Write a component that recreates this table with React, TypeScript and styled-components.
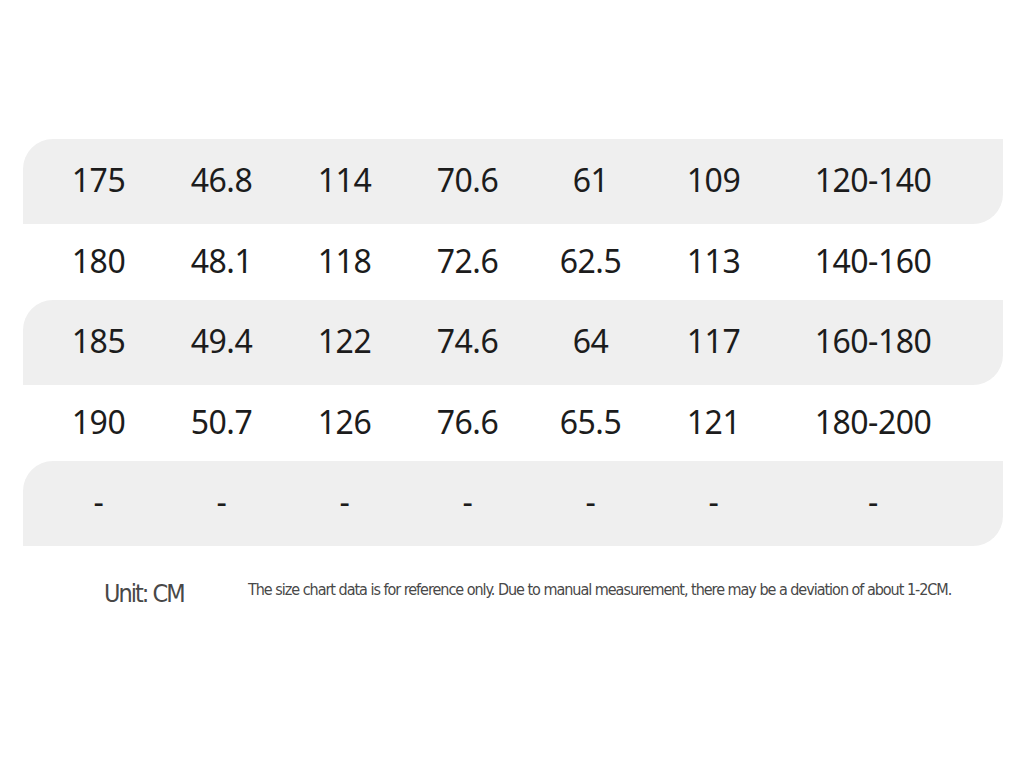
import styled, { createGlobalStyle } from 'styled-components'

const GlobalStyle = createGlobalStyle`
  body {
    margin: 0;
    background: #ffffff;
  }
`

const Page = styled.div`
  width: 1024px;
  height: 768px;
  padding-top: 139px;
  box-sizing: border-box;
`

const Table = styled.div`
  width: 980px;
  margin-left: 23px;
  display: flex;
  flex-direction: column;
`

const Row = styled.div<{ $shaded: boolean }>`
  display: grid;
  grid-template-columns: repeat(6, 123px) 196px;
  padding-left: 14px;
  padding-bottom: 3px;
  box-sizing: border-box;
  align-items: center;
  height: ${(p) => (p.$shaded ? '85px' : '76px')};
  background: ${(p) => (p.$shaded ? '#efefef' : 'transparent')};
  border-radius: 30px 0 30px 0;
`

const Cell = styled.div`
  text-align: center;
  font-family: 'Noto Sans', 'Open Sans', sans-serif;
  font-size: 32px;
  letter-spacing: -0.5px;
  color: #1c1c1c;
  line-height: 1;
`

const Footer = styled.div`
  display: flex;
  align-items: flex-start;
  padding-left: 104px;
  margin-top: 34px;
  color: #484848;
  font-family: 'DejaVu Sans Condensed', 'DejaVu Sans', sans-serif;
  font-stretch: condensed;
  white-space: nowrap;
`

const Unit = styled.div`
  width: 144px;
  font-size: 25px;
  letter-spacing: -2px;
  line-height: 1;
  margin-top: 1px;
`

const Note = styled.div`
  font-size: 16px;
  letter-spacing: -1.02px;
  line-height: 1;
  margin-top: 2px;
`

const rows = [
  ['175', '46.8', '114', '70.6', '61', '109', '120-140'],
  ['180', '48.1', '118', '72.6', '62.5', '113', '140-160'],
  ['185', '49.4', '122', '74.6', '64', '117', '160-180'],
  ['190', '50.7', '126', '76.6', '65.5', '121', '180-200'],
  ['-', '-', '-', '-', '-', '-', '-'],
]

export default function App() {
  return (
    <Page>
      <GlobalStyle />
      <Table>
        {rows.map((row, i) => (
          <Row key={i} $shaded={i % 2 === 0}>
            {row.map((v, j) => (
              <Cell key={j}>{v}</Cell>
            ))}
          </Row>
        ))}
      </Table>
      <Footer>
        <Unit>Unit: CM</Unit>
        <Note>
          The size chart data is for reference only. Due to manual measurement, there may be a
          deviation of about 1-2CM.
        </Note>
      </Footer>
    </Page>
  )
}
